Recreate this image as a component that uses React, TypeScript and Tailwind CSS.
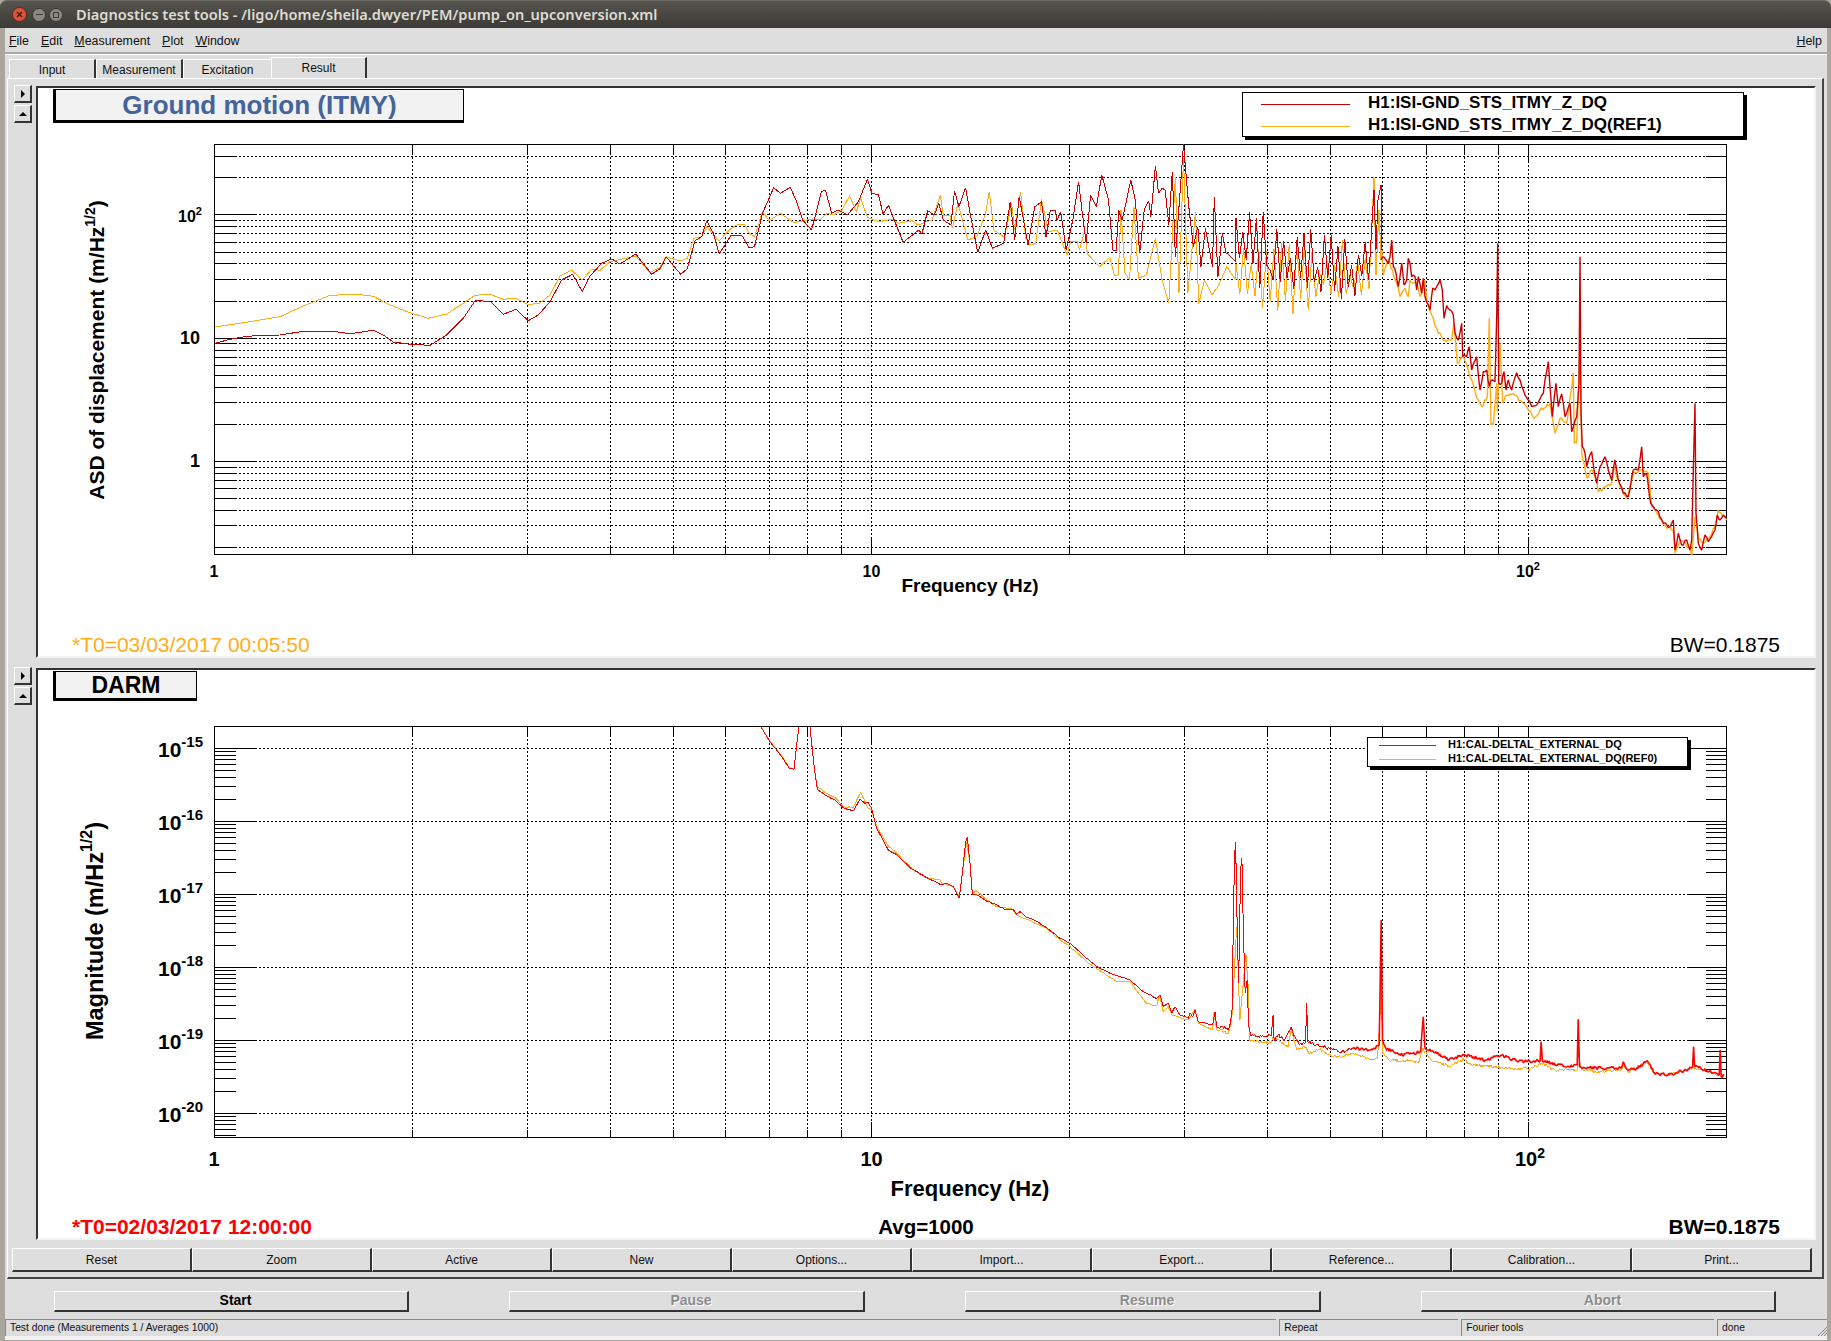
import React from "react";

type P = [number, number];
const SANS = "font-['Liberation_Sans',Arial,sans-serif]";
const svgFont = "'Liberation Sans', Arial, sans-serif";

function rng(seed: number) {
  let s = seed;
  return () => {
    s = (s * 1664525 + 1013904223) % 4294967296;
    return s / 4294967296;
  };
}
const z = (ox: number, oy: number, sx: number, sy: number, a: number[][]): P[] =>
  a.map(([x, y]) => [ox + x / sx, oy + y / sy] as P);

function jag(pts: P[], step: number, amp: number, seed: number): P[] {
  const r = rng(seed);
  const out: P[] = [];
  for (let i = 0; i < pts.length - 1; i++) {
    const [x0, y0] = pts[i];
    const [x1, y1] = pts[i + 1];
    const n = Math.max(1, Math.round(Math.abs(x1 - x0) / step));
    for (let k = 0; k < n; k++) {
      const t = k / n;
      out.push([x0 + (x1 - x0) * t, y0 + (y1 - y0) * t + (k === 0 ? 0 : (r() - 0.5) * amp * 2)]);
    }
  }
  out.push(pts[pts.length - 1]);
  return out;
}

function spikes(env: number[][], step: number, seed: number): P[] {
  const r = rng(seed);
  const out: P[] = [];
  let up = true;
  for (let x = env[0][0]; x < env[env.length - 1][0]; x += step) {
    let i = 0;
    while (i < env.length - 2 && env[i + 1][0] < x) i++;
    const t = (x - env[i][0]) / (env[i + 1][0] - env[i][0]);
    const hi = env[i][1] + (env[i + 1][1] - env[i][1]) * t;
    const lo = env[i][2] + (env[i + 1][2] - env[i][2]) * t;
    const v = r();
    const f = up ? v * v * 0.75 : 1 - v * 0.35;
    out.push([x, hi + (lo - hi) * f]);
    up = !up;
  }
  return out;
}

const str = (p: P[]) => p.map(([x, y]) => `${x.toFixed(1)},${y.toFixed(1)}`).join(" ");

/* ---------- plot 1 traces ---------- */
const r7 = z(210, 170, 3, 3, [[14,520],[60,508],[110,499],[160,496],[210,495],[280,484],[370,484],[420,491],[490,481],[520,495],[550,516],[600,523],[660,526],[710,495],[760,445],[795,392],[840,394],[880,433],[918,418],[955,452],[985,435],[1020,395],[1055,330],[1088,313],[1117,365],[1140,318],[1175,280],[1205,267],[1230,282],[1277,252],[1325,313],[1350,296],[1368,260],[1412,313],[1432,296],[1455,212],[1475,200]]);
const o7 = z(210, 170, 3, 3, [[14,471],[100,458],[210,440],[280,408],[360,376],[440,373],[490,379],[540,405],[600,428],[655,445],[710,432],[760,400],[795,376],[840,373],[880,388],[918,385],[955,404],[990,399],[1020,375],[1050,318],[1085,301],[1117,330],[1145,298],[1170,301],[1200,275],[1277,258],[1320,308],[1350,292],[1368,260],[1410,273],[1432,265],[1452,205],[1475,200]]);
const r6 = z(700, 130, 2.24, 3, [[15,272],[30,310],[43,372],[70,315],[95,318],[110,354],[122,350],[140,250],[165,173],[180,190],[202,172],[215,210],[230,270],[250,300],[272,185],[281,180],[295,250],[310,240],[330,255],[355,215],[375,148],[385,190],[400,195],[410,253],[422,225],[435,270],[455,337],[490,300],[497,312],[510,242],[525,255],[535,220],[545,270],[562,285],[570,183],[580,230],[595,173],[605,250],[622,367],[640,300],[655,355],[680,340],[695,215],[705,330],[715,200],[735,345],[750,230],[765,215],[775,320],[785,240],[795,240],[800,270],[808,245],[820,360],[835,270],[848,155],[855,235],[865,340],[875,195],[888,230],[900,135],[915,210],[925,360],[932,362],[938,240],[945,270],[950,245],[965,150],[975,210],[985,370],[995,240],[1005,212],[1010,260],[1020,108],[1027,190],[1035,175],[1042,180],[1050,285],[1058,125],[1065,380],[1083,43],[1095,230],[1105,350],[1115,290],[1122,410],[1132,295],[1148,410],[1152,200],[1160,440],[1170,310],[1178,370],[1183,372],[1200,395]]);
const o6 = z(700, 130, 2.24, 3, [[15,290],[42,333],[70,295],[85,283],[100,283],[110,310],[122,320],[140,245],[155,272],[180,250],[210,278],[240,270],[270,268],[285,250],[300,255],[318,240],[335,197],[350,245],[360,205],[375,262],[400,275],[430,268],[445,280],[475,272],[488,285],[520,270],[538,195],[545,255],[560,258],[565,295],[578,220],[600,330],[620,320],[640,250],[648,185],[658,300],[682,322],[698,220],[705,300],[718,185],[730,325],[740,345],[752,340],[765,208],[780,305],[800,300],[822,375],[830,335],[845,335],[850,360],[862,300],[868,372],[895,410],[918,382],[928,436],[937,435],[943,240],[952,430],[962,450],[972,230],[982,445],[1000,435],[1020,325],[1035,450],[1050,520],[1065,140],[1073,490],[1083,80],[1093,490],[1110,245],[1117,522],[1130,450],[1147,495],[1162,465],[1180,410],[1200,450]]);
const r8 = z(1380, 240, 3, 3, [[8,50],[25,70],[30,50],[35,0],[40,80],[48,100],[55,140],[65,70],[72,135],[80,120],[85,55],[90,70],[95,110],[105,110],[110,150],[115,110],[125,160],[130,115],[135,170],[150,210],[158,145],[165,150],[180,120],[187,150],[192,235],[200,197],[220,225],[225,280],[235,300],[245,250],[248,350],[260,350],[268,320],[275,390],[290,350],[300,450],[310,395],[320,390],[328,440],[335,420],[345,425],[350,230],[353,10],[356,430],[365,430],[372,395],[378,450],[385,420],[395,450],[410,398],[420,420],[430,450],[445,480],[455,500],[470,495],[490,460],[495,420],[505,365],[510,440],[517,530],[528,430],[535,500],[545,462],[555,530],[570,490],[575,575],[590,530],[597,430],[600,50],[603,520],[607,620],[615,640],[620,680],[635,635],[642,690],[650,730],[660,680],[675,650],[685,690],[695,720],[705,660],[715,720],[730,760],[745,770],[760,690],[775,690],[785,620],[790,710],[800,700],[812,790],[830,810],[850,850],[870,860],[880,840],[885,930],[895,880],[905,915],[920,900],[930,930],[935,900],[942,610],[945,490],[948,820],[955,910],[965,930],[975,885],[985,905],[1005,870],[1012,825],[1020,840],[1030,825],[1040,835]]);
const o8 = z(1380, 240, 3, 3, [[5,30],[10,105],[25,60],[50,130],[60,170],[75,145],[85,170],[90,120],[110,130],[120,170],[135,120],[140,180],[155,225],[170,265],[190,300],[215,300],[222,250],[232,370],[250,350],[275,420],[285,455],[300,490],[305,500],[322,470],[328,235],[333,555],[340,555],[350,430],[352,515],[360,310],[368,490],[380,465],[400,460],[430,490],[445,510],[462,535],[480,510],[510,490],[525,580],[540,535],[560,550],[580,400],[583,610],[590,610],[600,320],[605,640],[622,715],[635,690],[650,720],[655,755],[675,740],[695,730],[702,680],[720,740],[740,775],[760,700],[785,690],[805,700],[815,800],[830,820],[860,865],[880,870],[885,940],[900,900],[925,920],[935,945],[945,830],[955,895],[970,910],[990,890],[1005,860],[1015,810],[1040,840]]);
const rMid = spikes([[1236,215,277],[1260,210,290],[1290,222,300],[1320,232,300],[1345,238,302],[1370,240,290]], 3.4, 7);
const oMid = spikes([[1236,262,298],[1245,225,305],[1262,250,328],[1290,240,322],[1310,245,310],[1330,232,305],[1350,245,300],[1370,262,300]], 3.8, 23);
const red1a = str([...r7, ...r6, ...rMid, [1374,190],[1376,250],[1378,200],[1381,185],[1382,260]] as P[]);
const org1a = str([...o7, ...o6, ...oMid, [1374,177],[1376,275],[1379,210],[1381,260]] as P[]);
const red1b = str(jag([[1381,260] as P, ...r8], 1.5, 2, 11));
const org1b = str(jag([[1381,260] as P, ...o8], 1.5, 2, 31));

/* ---------- plot 2 traces ---------- */
const r9 = z(740, 720, 3, 3, [[62,20],[88,62],[125,110],[148,145],[162,148],[170,75],[177,20],[180,0],[205,0],[210,20],[218,100],[225,160],[232,208],[260,228],[285,240],[310,263],[340,273],[360,238],[375,250],[385,247],[395,265],[410,325],[445,390],[470,405],[515,447],[555,470],[600,493],[620,490],[640,500],[658,535],[668,450],[677,365],[682,350],[690,430],[697,523],[708,522],[735,540],[770,555],[800,570],[820,568],[830,583],[840,575],[860,592],[880,598],[915,620],[960,655],[990,670],[1040,715],[1070,740],[1110,760],[1170,780],[1210,815],[1250,835],[1260,825],[1270,860],[1285,850],[1295,880],[1305,860],[1320,885],[1345,895],[1350,878],[1358,890],[1365,870],[1375,905],[1418,915],[1425,875],[1430,920]]);
const o9 = z(740, 720, 3, 3, [[62,20],[88,60],[125,108],[148,143],[162,148],[170,75],[177,20],[180,0],[205,0],[210,20],[218,100],[225,160],[232,200],[260,220],[285,232],[310,260],[340,262],[362,217],[385,265],[395,270],[410,320],[445,378],[470,400],[515,445],[555,472],[600,480],[605,490],[640,500],[658,530],[668,450],[680,365],[690,430],[697,520],[708,512],[735,535],[770,560],[815,565],[830,585],[860,598],[915,622],[960,660],[990,680],[1040,725],[1085,755],[1130,785],[1170,785],[1200,825],[1220,850],[1250,858],[1258,825],[1270,875],[1285,860],[1295,885],[1345,900],[1365,868],[1375,910],[1418,930],[1422,880],[1430,930]]);
const r10 = z(1220, 720, 3.015, 3, [[0,925],[5,920],[25,930],[32,905],[37,865],[40,600],[44,410],[47,365],[52,620],[56,790],[62,450],[66,415],[71,650],[76,820],[82,780],[86,915],[92,945],[125,950],[155,945],[160,885],[163,960],[175,945],[195,960],[215,920],[225,950],[240,975],[258,965],[261,848],[265,965],[290,975],[330,985],[365,997],[400,985]]);
const r10b = z(1220, 720, 3.015, 3, [[400,985],[460,990],[480,975],[486,600],[490,960],[500,985],[550,1005],[605,995],[613,890],[618,985],[650,995],[690,1020],[735,1005],[800,1020],[850,1005],[900,1025],[965,1022],[968,965],[972,1022],[1040,1040],[1077,1035],[1080,898],[1084,1040],[1150,1045],[1210,1045],[1216,1025],[1230,1050],[1260,1045],[1288,1022],[1310,1060],[1350,1065],[1405,1050],[1425,1040],[1428,980],[1431,1040],[1480,1055],[1505,1065],[1508,990],[1511,1070],[1520,1065]]);
const o10 = z(1220, 720, 3.015, 3, [[0,930],[25,942],[32,915],[37,880],[50,620],[60,900],[78,700],[85,800],[88,950],[90,962],[125,965],[155,968],[160,950],[175,960],[205,980],[215,930],[232,990],[260,980],[268,1000],[300,988],[330,1005],[365,1012],[400,1000],[460,1018],[475,1015],[482,900],[486,730],[490,1000],[510,1020],[600,1025],[612,985],[635,1020],[690,1038],[735,1018],[760,1035],[850,1042],[905,1050],[920,1040],[930,1050],[968,1030],[1010,1050],[1077,1050],[1080,1000],[1090,1050],[1140,1055],[1210,1050],[1216,1035],[1230,1055],[1288,1025],[1310,1060],[1350,1065],[1425,1045],[1428,1000],[1431,1045],[1480,1058],[1505,1065],[1520,1070]]);
const red2a = str([...jag(r9, 2, 0.4, 5), ...jag(r10, 1, 1.4, 9)]);
const red2b = str(jag(r10b, 1, 1.6, 13));
const org2 = str([...jag(o9, 2, 0.4, 15), ...jag(o10, 1, 1.3, 19)]);

/* ---------- axes ---------- */
const fx = (f: number) => 214.5 + 657 * Math.log10(f);
const fTicks = [2,3,4,5,6,7,8,9,10,20,30,40,50,60,70,80,90,100];

function Axes({ top, bottom, ys, majors, minorGrid }: { top: number; bottom: number; ys: number[]; majors: number[]; minorGrid: boolean }) {
  const L = 214.5;
  const R = 1726.5;
  const grid = minorGrid ? majors.concat(ys) : majors;
  return (
    <g shapeRendering="crispEdges" stroke="#000">
      {grid.map((y, i) => (
        <line key={`h${i}`} x1={L} x2={R} y1={y} y2={y} strokeDasharray="2 2" />
      ))}
      {fTicks.map((f) => (
        <line key={`v${f}`} x1={fx(f)} x2={fx(f)} y1={top} y2={bottom} strokeDasharray="2 2" />
      ))}
      {ys.map((y, i) => (
        <g key={`t${i}`}>
          <line x1={L} x2={L + 21} y1={y} y2={y} />
          <line x1={R - 21} x2={R} y1={y} y2={y} />
        </g>
      ))}
      {majors.map((y, i) => (
        <g key={`m${i}`}>
          <line x1={L} x2={L + 40} y1={y} y2={y} />
          <line x1={R - 40} x2={R} y1={y} y2={y} />
        </g>
      ))}
      {fTicks.map((f) => {
        const l = f === 10 || f === 100 ? 16 : 8;
        return (
          <g key={`x${f}`}>
            <line x1={fx(f)} x2={fx(f)} y1={top} y2={top + l} />
            <line x1={fx(f)} x2={fx(f)} y1={bottom - l} y2={bottom} />
          </g>
        );
      })}
      <rect x={L} y={top} width={R - L} height={bottom - top} fill="none" strokeWidth={1.5} />
    </g>
  );
}

const y1 = (v: number) => 461.5 - 123.3 * Math.log10(v);
const minor1 = [0.2,0.3,0.4,0.5,0.6,0.7,0.8,0.9,2,3,4,5,6,7,8,9,20,30,40,50,60,70,80,90,200,300].map(y1);
const major1 = [1,10,100].map(y1);

const y2 = (d: number) => 748.3 + 73 * d; // decades below 1e-15
const minor2: number[] = [];
for (let d = -1; d < 6; d++) {
  for (const m of [2,3,4,5,6,7,8,9]) {
    const y = y2(d + 1 - Math.log10(m));
    if (y > 725 && y < 1137) minor2.push(y);
  }
}
const major2 = [0,1,2,3,4,5].map(y2);

function T(props: React.SVGProps<SVGTextElement>) {
  return <text fontFamily={svgFont} fill="#000" {...props} />;
}

function Chart1() {
  return (
    <svg className="absolute left-0 top-0" width={1776} height={568} viewBox="38 88 1776 568">
      <defs>
        <clipPath id="c1"><rect x={214} y={144} width={1513} height={411} /></clipPath>
      </defs>
      <Axes top={144.5} bottom={554.5} ys={minor1} majors={major1} minorGrid />
      <g clipPath="url(#c1)" fill="none" strokeLinejoin="bevel">
        <polyline points={org1a} stroke="#ffad14" shapeRendering="crispEdges" />
        <polyline points={red1a} stroke="#cc0000" shapeRendering="crispEdges" />
        <polyline points={org1b} stroke="#ffad14" strokeWidth={1.4} />
        <polyline points={red1b} stroke="#cc0000" strokeWidth={1.4} />
      </g>
      <T x={178} y={222} fontWeight="700" fontSize={16}>10<tspan dy={-7} fontSize={11}>2</tspan></T>
      <T x={200} y={344} textAnchor="end" fontWeight="700" fontSize={18}>10</T>
      <T x={200} y={467} textAnchor="end" fontWeight="700" fontSize={18}>1</T>
      <T x={214} y={577} textAnchor="middle" fontWeight="700" fontSize={16}>1</T>
      <T x={871.5} y={577} textAnchor="middle" fontWeight="700" fontSize={16}>10</T>
      <T x={1516} y={577} fontWeight="700" fontSize={16}>10<tspan dy={-7} fontSize={11}>2</tspan></T>
      <T x={970} y={592} textAnchor="middle" fontWeight="700" fontSize={19}>Frequency (Hz)</T>
      <T x={104} y={350} textAnchor="middle" fontWeight="700" fontSize={21} transform="rotate(-90 104 350)">
        ASD of displacement (m/Hz<tspan dy={-9} fontSize={14}>1/2</tspan><tspan dy={9}>)</tspan>
      </T>
      <T x={72} y={652} fill="#ffad14" fontSize={21}>*T0=03/03/2017 00:05:50</T>
      <T x={1780} y={652} textAnchor="end" fontSize={21}>BW=0.1875</T>
    </svg>
  );
}

function Chart2() {
  const labels = [15,16,17,18,19,20];
  return (
    <svg className="absolute left-0 top-0" width={1776} height={568} viewBox="38 670 1776 568">
      <defs>
        <clipPath id="c2"><rect x={214} y={727} width={1513} height={410} /></clipPath>
      </defs>
      <Axes top={726.5} bottom={1137.5} ys={minor2} majors={major2} minorGrid={false} />
      <g clipPath="url(#c2)" fill="none" strokeLinejoin="bevel">
        <polyline points={org2} stroke="#ffad14" shapeRendering="crispEdges" />
        <polyline points={red2a} stroke="#ff0000" shapeRendering="crispEdges" />
        <polyline points={red2b} stroke="#ff0000" strokeWidth={1.6} />
      </g>
      {labels.map((l, i) => (
        <T key={l} x={158} y={757 + 73 * i} fontWeight="700" fontSize={21}>
          10<tspan dy={-10} fontSize={15}>-{l}</tspan>
        </T>
      ))}
      <T x={214} y={1166} textAnchor="middle" fontWeight="700" fontSize={20}>1</T>
      <T x={871.5} y={1166} textAnchor="middle" fontWeight="700" fontSize={20}>10</T>
      <T x={1515} y={1166} fontWeight="700" fontSize={20}>10<tspan dy={-8} fontSize={14}>2</tspan></T>
      <T x={970} y={1196} textAnchor="middle" fontWeight="700" fontSize={22}>Frequency (Hz)</T>
      <T x={103} y={931} textAnchor="middle" fontWeight="700" fontSize={23.5} transform="rotate(-90 103 931)">
        Magnitude (m/Hz<tspan dy={-11} fontSize={16}>1/2</tspan><tspan dy={11}>)</tspan>
      </T>
      <T x={72} y={1234} fill="#ff0000" fontWeight="700" fontSize={21}>*T0=02/03/2017 12:00:00</T>
      <T x={926} y={1234} textAnchor="middle" fontWeight="700" fontSize={20.5}>Avg=1000</T>
      <T x={1780} y={1234} textAnchor="end" fontWeight="700" fontSize={21}>BW=0.1875</T>
    </svg>
  );
}

/* ---------- widgets ---------- */
const raised = "border-t border-l border-t-white border-l-white border-r-2 border-b-2 border-r-[#333] border-b-[#333]";

function ArrowBtn({ dir }: { dir: "right" | "up" }) {
  return (
    <div className={`${raised} w-[18px] h-[18px] flex items-center justify-center bg-[#dedede]`}>
      <svg width="8" height="8" viewBox="0 0 8 8">
        {dir === "right" ? <path d="M2 0 L6 4 L2 8 Z" fill="#000" /> : <path d="M0 6 L4 2 L8 6 Z" fill="#000" />}
      </svg>
    </div>
  );
}

function Plot({ children, title, titleCls, legend }: { children: React.ReactNode; title: React.ReactNode; titleCls: string; legend: React.ReactNode }) {
  return (
    <div className="flex">
      <div className="w-[28px] shrink-0 pl-[6px] -mt-px flex flex-col gap-[2px]">
        <ArrowBtn dir="right" />
        <ArrowBtn dir="up" />
      </div>
      <div className="relative w-[1780px] h-[572px] bg-white border-2 border-t-[#333] border-l-[#333] border-r-[#f4f4f4] border-b-[#f4f4f4] overflow-hidden">
        {children}
        <div className={`absolute top-px left-[15px] bg-[#f2f2f2] border border-black border-l-[3px] border-b-[3px] flex items-center justify-center font-bold ${SANS} ${titleCls}`}>
          {title}
        </div>
        {legend}
      </div>
    </div>
  );
}

const bottomBtns = ["Reset","Zoom","Active","New","Options...","Import...","Export...","Reference...","Calibration...","Print..."];
const runBtn = `${raised} h-[21px] flex items-center justify-center pl-[9px] pb-px font-bold text-[14px]`;
const disabled = "text-[#8c8c8c] [text-shadow:1px_1px_0_#fff]";

export default function App() {
  return (
    <div className={`w-[1831px] h-[1341px] overflow-hidden flex flex-col bg-[#a9a69e] ${SANS} text-[12px] text-[#111]`}>
      {/* Window title bar */}
      <div className="h-[28px] shrink-0 rounded-t-[7px] bg-gradient-to-b from-[#55544e] to-[#3b3a36] border-t border-t-[#6a6962] flex items-center pl-[12px]">
        <div className="w-[15px] h-[15px] rounded-full bg-[#d9543a] border border-[#5c2a1e] flex items-center justify-center">
          <svg width="7" height="7" viewBox="0 0 7 7"><path d="M1 1 L6 6 M6 1 L1 6" stroke="#3a1a12" strokeWidth="1.4" /></svg>
        </div>
        <div className="ml-[5px] w-[14px] h-[14px] rounded-full bg-[#8a8880] border border-[#3a3935] flex items-center justify-center">
          <div className="w-[7px] h-[1.5px] bg-[#3c3b37]" />
        </div>
        <div className="ml-[3px] w-[14px] h-[14px] rounded-full bg-[#8a8880] border border-[#3a3935] flex items-center justify-center">
          <div className="w-[6px] h-[6px] border border-[#3c3b37]" />
        </div>
        <div className="ml-[13px] text-[#dfdbd2] text-[14.6px] font-semibold font-['Noto_Sans',sans-serif] whitespace-nowrap">
          Diagnostics test tools - /ligo/home/sheila.dwyer/PEM/pump_on_upconversion.xml
        </div>
      </div>

      {/* Window body */}
      <div className="flex-1 flex flex-col ml-[5px] mr-[4px] mb-px bg-[#dedede]">
        {/* Menu */}
        <div className="h-[26px] shrink-0 flex items-center text-[12.4px] pl-[4px] pr-[5px] pt-[2px] gap-[12px] border-b-2 border-b-[#a8a8a8]">
          <span><u>F</u>ile</span>
          <span><u>E</u>dit</span>
          <span><u>M</u>easurement</span>
          <span><u>P</u>lot</span>
          <span><u>W</u>indow</span>
          <span className="ml-auto"><u>H</u>elp</span>
        </div>

        {/* Tabs */}
        <div className="h-[24px] shrink-0 flex items-end pl-[4px] border-t border-t-white">
          <div className="w-[87px] h-[19px] flex items-center justify-center pt-[2px] border-t border-l border-white border-r-2 border-r-[#333]">Input</div>
          <div className="w-[87px] h-[19px] flex items-center justify-center pt-[2px] border-t border-l border-white border-r-2 border-r-[#333]">Measurement</div>
          <div className="w-[88px] h-[19px] flex items-center justify-center pt-[2px] border-t border-l border-white">Excitation</div>
          <div className="w-[96px] h-[21px] flex items-center justify-center pb-[1px] border-t border-l border-white border-r-2 border-r-[#333]">Result</div>
        </div>

        {/* Panel */}
        <div className="ml-[2px] mr-[3px] shrink-0 border-t border-l border-t-white border-l-white border-r-2 border-b-2 border-r-[#444] border-b-[#444] pt-[7px] pb-[5px]">
          <Plot
            title="Ground motion (ITMY)"
            titleCls="w-[411px] h-[34px] text-[26px] text-[#45649b]"
            legend={
              <div className="absolute left-[1204px] top-[4px] w-[502px] h-[45px] bg-white border border-black shadow-[3px_3px_0_#000] text-[17px] font-bold">
                <div className="flex items-center h-[22px] pl-[18px]">
                  <div className="w-[89px] h-px bg-[#cc0000]" />
                  <span className="ml-[18px] text-black -mt-[2px]">H1:ISI-GND_STS_ITMY_Z_DQ</span>
                </div>
                <div className="flex items-center h-[22px] pl-[18px]">
                  <div className="w-[89px] h-px bg-[#ffad14]" />
                  <span className="ml-[18px] text-black -mt-[2px]">H1:ISI-GND_STS_ITMY_Z_DQ(REF1)</span>
                </div>
              </div>
            }
          >
            <Chart1 />
          </Plot>
          <div className="h-[10px]" />
          <Plot
            title="DARM"
            titleCls="w-[144px] h-[30px] text-[23px] text-black"
            legend={
              <div className="absolute left-[1329px] top-[67px] w-[321px] h-[30px] bg-white border border-black shadow-[3px_3px_0_#000] text-[11px] font-bold">
                <div className="flex items-center h-[14px] pl-[11px]">
                  <div className="w-[57px] h-px bg-[#ff0000]" />
                  <span className="ml-[12px] text-black -mt-[2px]">H1:CAL-DELTAL_EXTERNAL_DQ</span>
                </div>
                <div className="flex items-center h-[14px] pl-[11px]">
                  <div className="w-[57px] h-px bg-[#ffad14]" />
                  <span className="ml-[12px] text-black -mt-[2px]">H1:CAL-DELTAL_EXTERNAL_DQ(REF0)</span>
                </div>
              </div>
            }
          >
            <Chart2 />
          </Plot>
          <div className="flex pl-[4px] mt-[8px]">
            {bottomBtns.map((b) => (
              <div key={b} className={`${raised} w-[180px] h-[24px] flex items-center justify-center`}>{b}</div>
            ))}
          </div>
        </div>

        {/* Run controls */}
        <div className="flex pl-[49px] gap-[100px] mt-[12px] shrink-0">
          <div className={`${runBtn} w-[355px] text-black`}>Start</div>
          <div className={`${runBtn} w-[356px] ${disabled}`}>Pause</div>
          <div className={`${runBtn} w-[356px] ${disabled}`}>Resume</div>
          <div className={`${runBtn} w-[355px] ${disabled}`}>Abort</div>
        </div>

        {/* Status bar */}
        <div className="flex gap-[3px] mt-[7px] h-[17px] shrink-0 text-[10.3px] relative">
          <div className="w-[1272px] pl-[4px] pb-px flex items-center border-t border-l border-[#8a8a8a]">Test done (Measurements 1 / Averages 1000)</div>
          <div className="w-[179px] pl-[4px] pb-px flex items-center border-t border-l border-[#8a8a8a]">Repeat</div>
          <div className="w-[253px] pl-[4px] pb-px flex items-center border-t border-l border-[#8a8a8a]">Fourier tools</div>
          <div className="w-[110px] pl-[4px] pb-px flex items-center border-t border-l border-[#8a8a8a]">done</div>
          <svg className="absolute right-0 bottom-0" width="10" height="10" viewBox="0 0 10 10">
            <path d="M10 1 L1 10 M10 4 L4 10 M10 7 L7 10" stroke="#8a8a8a" />
          </svg>
        </div>
        <div className="flex-1 bg-[#f2f2f2]" />
      </div>
    </div>
  );
}
